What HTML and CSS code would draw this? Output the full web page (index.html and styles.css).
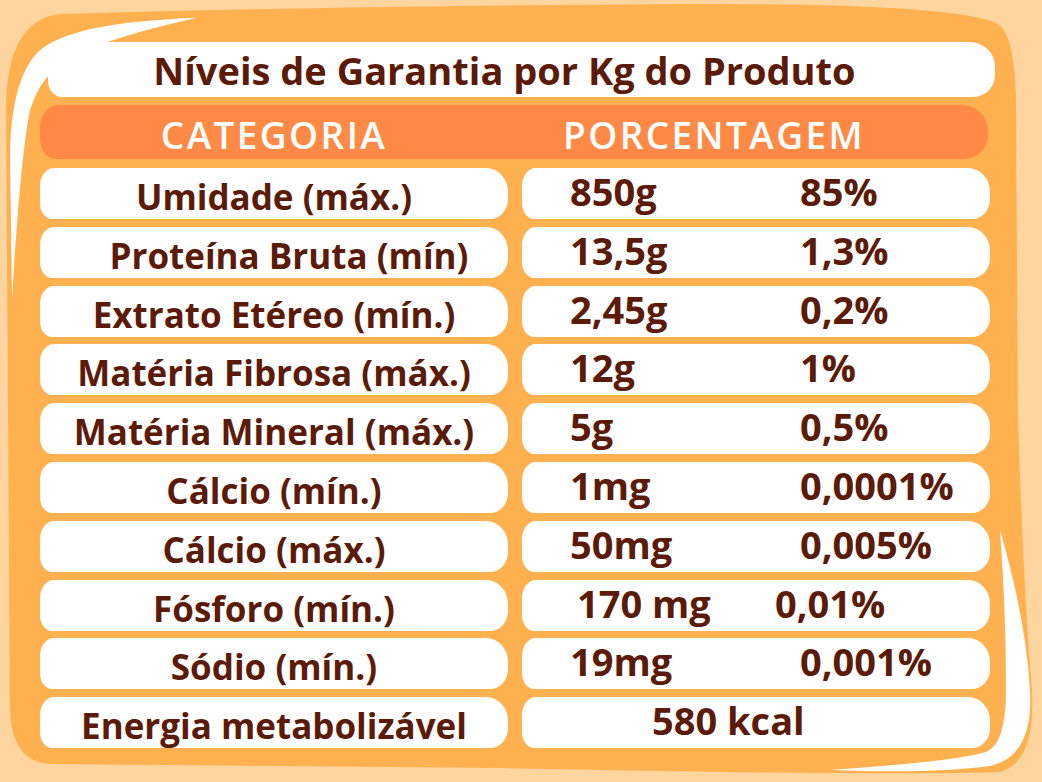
FILE: index.html
```html
<!DOCTYPE html>
<html lang="pt-BR">
<head>
<meta charset="utf-8">
<title>Níveis de Garantia</title>
<link rel="stylesheet" href="styles.css">
</head>
<body>
<div class="page">
  <svg class="deco" viewBox="0 0 1042 782" width="1042" height="782" aria-hidden="true">
    <rect width="1042" height="782" fill="#fed49f"/>
    <path fill="#ffb14f" d="M60 14 Q 320 6 700 4 Q 960 4 998 24 Q 1016 36 1016 110 L 1018 420 Q 1024 600 1032 690 Q 1036 762 1000 772 Q 900 776 500 768 L 50 764 Q 12 762 10 710 L 6 110 Q 6 20 60 14 Z"/>
    <path fill="#ffffff" d="M196 18 Q 70 22 38 52 Q 12 78 10 150 L 12 300 Q 20 160 30 110 Q 44 64 90 48 Q 140 30 196 18 Z"/>
    <path fill="#ffffff" d="M1000 530 Q 1026 620 1030 690 Q 1034 756 990 766 Q 930 774 830 770 Q 950 762 986 752 Q 1006 744 1006 690 Q 1006 610 1000 530 Z"/>
  </svg>
  <main class="panel">
    <h1 class="title">Níveis de Garantia por Kg do Produto</h1>
    <div class="head">
      <div class="head-cat">CATEGORIA</div>
      <div class="head-pct">PORCENTAGEM</div>
    </div>
    <div class="rows">
      <div class="cell cat">Umidade (máx.)</div>
      <div class="cell val"><span class="g">850g</span><span class="p">85%</span></div>

      <div class="cell cat shift">Proteína Bruta (mín)</div>
      <div class="cell val"><span class="g">13,5g</span><span class="p">1,3%</span></div>

      <div class="cell cat">Extrato Etéreo (mín.)</div>
      <div class="cell val"><span class="g">2,45g</span><span class="p">0,2%</span></div>

      <div class="cell cat">Matéria Fibrosa (máx.)</div>
      <div class="cell val"><span class="g">12g</span><span class="p">1%</span></div>

      <div class="cell cat">Matéria Mineral (máx.)</div>
      <div class="cell val"><span class="g">5g</span><span class="p">0,5%</span></div>

      <div class="cell cat">Cálcio (mín.)</div>
      <div class="cell val"><span class="g">1mg</span><span class="p">0,0001%</span></div>

      <div class="cell cat">Cálcio (máx.)</div>
      <div class="cell val"><span class="g">50mg</span><span class="p">0,005%</span></div>

      <div class="cell cat">Fósforo (mín.)</div>
      <div class="cell val alt"><span class="g">170 mg</span><span class="p">0,01%</span></div>

      <div class="cell cat">Sódio (mín.)</div>
      <div class="cell val"><span class="g">19mg</span><span class="p">0,001%</span></div>

      <div class="cell cat">Energia metabolizável</div>
      <div class="cell val total">580 kcal</div>
    </div>
  </main>
</div>
</body>
</html>
```

FILE: styles.css
```css
* { box-sizing: border-box; }
html, body { margin: 0; padding: 0; }
body {
  width: 1042px;
  height: 782px;
  overflow: hidden;
  background: #fed49f;
  font-family: "Open Sans", "Liberation Sans", sans-serif;
  font-weight: 700;
  color: #5c1a09;
}
.page {
  position: relative;
  width: 1042px;
  height: 782px;
}
.deco {
  position: absolute;
  left: 0;
  top: 0;
  display: block;
}
.panel {
  position: relative;
  display: flex;
  flex-direction: column;
  padding: 42px 52px 0 40px;
}
.title {
  margin: 0 -5px 0 8px;
  height: 55px;
  background: #fff;
  border-radius: 16px 26px 22px 14px / 20px 24px 22px 16px;
  display: flex;
  align-items: center;
  justify-content: center;
  font-size: 38px;
  font-weight: 700;
  line-height: 1;
  padding-right: 34px;
  padding-top: 0;
}
.head {
  margin-top: 8px;
  height: 54px;
  margin-right: 2px;
  background: #ff8945;
  border-radius: 18px 26px 24px 16px / 22px 26px 24px 20px;
  display: grid;
  grid-template-columns: 468px 1fr;
  column-gap: 14px;
  align-items: center;
  color: #fff;
  font-size: 37px;
  font-weight: 600;
  line-height: 1;
  letter-spacing: 2.4px;
  padding-top: 4px;
}
.head-cat { text-align: center; }
.head-pct { padding-left: 41px; }
.rows {
  margin-top: 9px;
  display: grid;
  grid-template-columns: 468px 468px;
  column-gap: 14px;
  row-gap: 7.8px;
  grid-auto-rows: 51px;
}
.cell {
  background: #fff;
  border-radius: 14px 22px 18px 12px / 18px 24px 20px 16px;
  display: flex;
  align-items: center;
  line-height: 1;
}
.cat {
  justify-content: center;
  font-size: 35px;
  padding-top: 6px;
}
.cat.shift { padding-left: 30px; }
.val {
  padding-left: 48px;
  font-size: 38px;
  padding-bottom: 5px;
}
.g { width: 230px; flex: none; }
.val.alt { padding-left: 55px; }
.val.alt .g { width: 198px; }
.total { padding-left: 130px; }
```
